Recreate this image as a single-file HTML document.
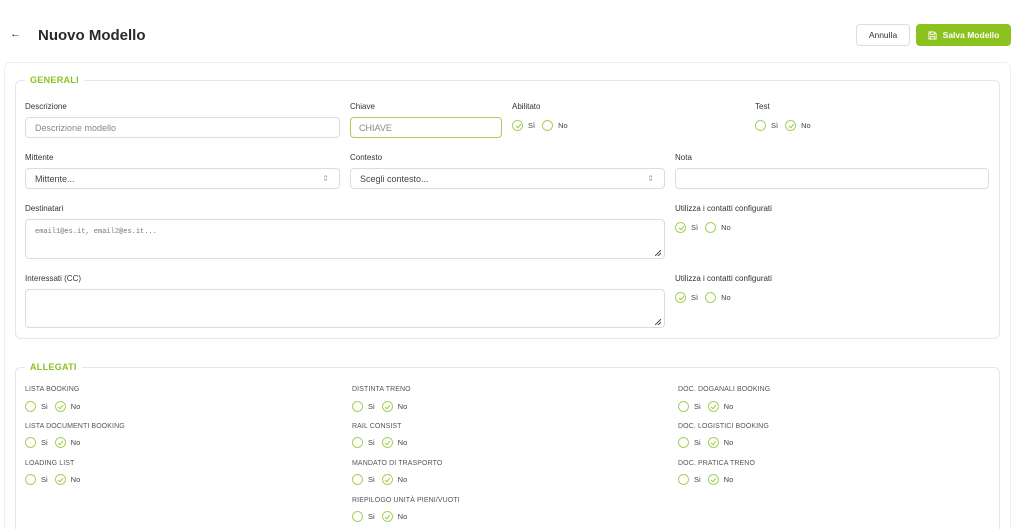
<!DOCTYPE html>
<html><head><meta charset="utf-8">
<style>
*{box-sizing:border-box;margin:0;padding:0}
html,body{width:1024px;height:529px;overflow:hidden}
body{background:#fff;font-family:"Liberation Sans",sans-serif;color:#333;position:relative}
.a{position:absolute}
.lbl{position:absolute;font-size:8px;color:#333}
.inp{position:absolute;border:1px solid #dcdcdc;border-radius:4px;background:#fff;font-size:9px;color:#666;padding-left:9px;display:flex;align-items:center}
.leg{position:absolute;background:#fff;padding:0 5px;font-size:9px;font-weight:bold;color:#8cc21f;letter-spacing:.3px}
.fs{position:absolute;border:1px solid #e6e6e6;border-radius:6px}
.r{position:absolute;display:flex;align-items:center;font-size:7.5px;color:#444}
.c{width:11px;height:11px;border:1px solid #a6d05a;border-radius:50%;display:inline-block;position:relative;margin-right:5px}
.c.k::after{content:"";position:absolute;left:3.5px;top:2px;width:2px;height:4px;border:solid #9ccb45;border-width:0 .8px .8px 0;transform:rotate(40deg)}
.t{margin-right:7px}
.al{position:absolute;font-size:7px;color:#555;letter-spacing:.1px}
.ar{position:absolute;right:10px;font-size:8px;color:#aaa}
.rs{position:absolute;right:3px;bottom:2px;width:6px;height:6px;background:linear-gradient(135deg,transparent 45%,#555 45%,#555 55%,transparent 55%,transparent 70%,#555 70%,#555 80%,transparent 80%)}
</style></head><body>
<div class="a" style="left:10px;top:28px;font-size:11px;color:#333">&#8592;</div>
<div class="a" style="left:38px;top:27px;font-size:15px;font-weight:bold;color:#2a2a2a">Nuovo Modello</div>
<div class="a" style="left:856px;top:24px;width:54px;height:22px;border:1px solid #ddd;border-radius:4px;font-size:8.5px;display:flex;align-items:center;justify-content:center">Annulla</div>
<div class="a" style="left:916px;top:24px;width:95px;height:22px;background:#8cc21f;border-radius:4px;font-size:8.5px;font-weight:bold;color:#fff;display:flex;align-items:center;justify-content:center"><svg width="9" height="9" viewBox="0 0 10 10" style="margin-right:6px"><path d="M1 1h6l2 2v6H1z M3 1v3h4V1 M3 9V6h4v3" fill="none" stroke="#fff" stroke-width="1"/></svg>Salva Modello</div>

<div class="a" style="left:4px;top:62px;width:1007px;height:600px;border:1px solid #eee;border-radius:6px"></div>

<div class="fs" style="left:15px;top:80px;width:985px;height:259px"></div>
<div class="leg" style="left:25px;top:75px">GENERALI</div>
<div class="lbl" style="left:25px;top:102px">Descrizione</div>
<div class="inp" style="left:25px;top:117px;width:315px;height:21px;color:#888">Descrizione modello</div>
<div class="lbl" style="left:350px;top:102px">Chiave</div>
<div class="inp" style="left:350px;top:117px;width:152px;height:21px;border-color:#a6d05a;color:#888;padding-left:8px">CHIAVE</div>
<div class="lbl" style="left:512px;top:102px">Abilitato</div>
<div class="r" style="left:512px;top:120px"><span class="c k"></span><span class="t">Sì</span><span class="c"></span>No</div>
<div class="lbl" style="left:755px;top:102px">Test</div>
<div class="r" style="left:755px;top:120px"><span class="c"></span><span class="t">Sì</span><span class="c k"></span>No</div>

<div class="lbl" style="left:25px;top:153px">Mittente</div>
<div class="inp" style="left:25px;top:168px;width:315px;height:21px;color:#444">Mittente...<span class="ar">&#8661;</span></div>
<div class="lbl" style="left:350px;top:153px">Contesto</div>
<div class="inp" style="left:350px;top:168px;width:315px;height:21px;color:#444">Scegli contesto...<span class="ar">&#8661;</span></div>
<div class="lbl" style="left:675px;top:153px">Nota</div>
<div class="inp" style="left:675px;top:168px;width:314px;height:21px"></div>

<div class="lbl" style="left:25px;top:204px">Destinatari</div>
<div class="inp" style="left:25px;top:219px;width:640px;height:40px;align-items:flex-start;padding-top:8px;font-family:'Liberation Mono',monospace;font-size:7px;color:#777">email1@es.it, email2@es.it...<span class="rs"></span></div>
<div class="lbl" style="left:675px;top:204px">Utilizza i contatti configurati</div>
<div class="r" style="left:675px;top:222px"><span class="c k"></span><span class="t">Sì</span><span class="c"></span>No</div>

<div class="lbl" style="left:25px;top:274px">Interessati (CC)</div>
<div class="inp" style="left:25px;top:289px;width:640px;height:39px"><span class="rs"></span></div>
<div class="lbl" style="left:675px;top:274px">Utilizza i contatti configurati</div>
<div class="r" style="left:675px;top:292px"><span class="c k"></span><span class="t">Sì</span><span class="c"></span>No</div>

<div class="fs" style="left:15px;top:367px;width:985px;height:300px"></div>
<div class="leg" style="left:25px;top:362px">ALLEGATI</div>

<div class="al" style="left:25px;top:386px">LISTA BOOKING</div>
<div class="r" style="left:25px;top:401px"><span class="c"></span><span class="t">Si</span><span class="c k"></span>No</div>
<div class="al" style="left:25px;top:423px">LISTA DOCUMENTI BOOKING</div>
<div class="r" style="left:25px;top:437px"><span class="c"></span><span class="t">Si</span><span class="c k"></span>No</div>
<div class="al" style="left:25px;top:460px">LOADING LIST</div>
<div class="r" style="left:25px;top:474px"><span class="c"></span><span class="t">Si</span><span class="c k"></span>No</div>

<div class="al" style="left:352px;top:386px">DISTINTA TRENO</div>
<div class="r" style="left:352px;top:401px"><span class="c"></span><span class="t">Si</span><span class="c k"></span>No</div>
<div class="al" style="left:352px;top:423px">RAIL CONSIST</div>
<div class="r" style="left:352px;top:437px"><span class="c"></span><span class="t">Si</span><span class="c k"></span>No</div>
<div class="al" style="left:352px;top:460px">MANDATO DI TRASPORTO</div>
<div class="r" style="left:352px;top:474px"><span class="c"></span><span class="t">Si</span><span class="c k"></span>No</div>
<div class="al" style="left:352px;top:497px">RIEPILOGO UNITÀ PIENI/VUOTI</div>
<div class="r" style="left:352px;top:511px"><span class="c"></span><span class="t">Si</span><span class="c k"></span>No</div>

<div class="al" style="left:678px;top:386px">DOC. DOGANALI BOOKING</div>
<div class="r" style="left:678px;top:401px"><span class="c"></span><span class="t">Si</span><span class="c k"></span>No</div>
<div class="al" style="left:678px;top:423px">DOC. LOGISTICI BOOKING</div>
<div class="r" style="left:678px;top:437px"><span class="c"></span><span class="t">Si</span><span class="c k"></span>No</div>
<div class="al" style="left:678px;top:460px">DOC. PRATICA TRENO</div>
<div class="r" style="left:678px;top:474px"><span class="c"></span><span class="t">Si</span><span class="c k"></span>No</div>
</body></html>
